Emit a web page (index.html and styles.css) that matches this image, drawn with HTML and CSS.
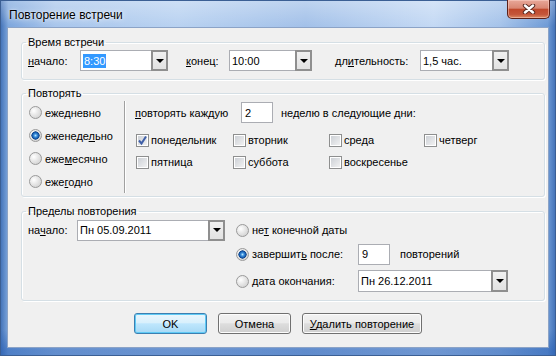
FILE: index.html
```html
<!DOCTYPE html>
<html lang="ru">
<head>
    <meta charset="UTF-8">
    <meta name="viewport" content="width=device-width, initial-scale=1.0">
    <title>Повторение встречи</title>
    <link rel="stylesheet" href="styles.css">
</head>
<body>
    <div class="window">
        <div class="titlebar">
            <span class="title">Повторение встречи</span>
            <button class="close" title="Закрыть">
                <svg width="14" height="10" viewBox="0 0 14 10">
                    <path d="M3 1.5 L11 8.5 M11 1.5 L3 8.5" stroke="#5a2a22" stroke-width="4.4" stroke-linecap="round"/>
                    <path d="M3 1.5 L11 8.5 M11 1.5 L3 8.5" stroke="#fff" stroke-width="2.4" stroke-linecap="round"/>
                </svg>
            </button>
        </div>

        <div class="client">
            <fieldset class="group group-time">
                <legend>Время встречи</legend>
                <div class="time-row">
                    <span class="lbl lbl-start"><u>н</u>ачало:</span>
                    <div class="combo combo-start">
                        <span class="value"><span class="sel">8:30</span></span>
                        <span class="drop"></span>
                    </div>
                    <span class="lbl lbl-end"><u>к</u>онец:</span>
                    <div class="combo combo-end">
                        <span class="value">10:00</span>
                        <span class="drop"></span>
                    </div>
                    <span class="lbl lbl-dur">дл<u>и</u>тельность:</span>
                    <div class="combo combo-dur">
                        <span class="value">1,5 час.</span>
                        <span class="drop"></span>
                    </div>
                </div>
            </fieldset>

            <fieldset class="group group-repeat">
                <legend>Повторять</legend>
                <div class="repeat-body">
                    <div class="freq">
                        <label class="opt"><span class="radio"></span><span>еже<u>д</u>невно</span></label>
                        <label class="opt"><span class="radio on"></span><span>еженеде<u>л</u>ьно</span></label>
                        <label class="opt"><span class="radio"></span><span>еже<u>м</u>есячно</span></label>
                        <label class="opt"><span class="radio"></span><span>еже<u>г</u>одно</span></label>
                    </div>
                    <div class="weekly">
                        <div class="every-row">
                            <span class="every-lbl"><u>п</u>овторять каждую</span>
                            <span class="field field-every">2</span>
                            <span class="every-tail">неделю в следующие дни:</span>
                        </div>
                        <div class="days">
                            <label class="opt day">
                                <span class="check on">
                                    <svg width="11" height="11" viewBox="0 0 11 11"><path d="M2 5.5 L4.5 8.5 L9 1.5" fill="none" stroke="#3f5fa8" stroke-width="2"/></svg>
                                </span><span>понедельник</span>
                            </label>
                            <label class="opt day"><span class="check"></span><span>вторник</span></label>
                            <label class="opt day"><span class="check"></span><span>среда</span></label>
                            <label class="opt day"><span class="check"></span><span>четверг</span></label>
                            <label class="opt day"><span class="check"></span><span>пятница</span></label>
                            <label class="opt day"><span class="check"></span><span>суббота</span></label>
                            <label class="opt day"><span class="check"></span><span>воскресенье</span></label>
                        </div>
                    </div>
                </div>
            </fieldset>

            <fieldset class="group group-range">
                <legend>Пределы повторения</legend>
                <div class="range-body">
                    <div class="range-start">
                        <span class="lbl lbl-from">на<u>ч</u>ало:</span>
                        <div class="combo combo-from">
                            <span class="value">Пн 05.09.2011</span>
                            <span class="drop"></span>
                        </div>
                    </div>
                    <div class="range-end">
                        <label class="opt end-opt"><span class="radio"></span><span>не<u>т</u> конечной даты</span></label>
                        <div class="end-row">
                            <label class="opt end-label"><span class="radio on"></span><span>завершит<u>ь</u> после:</span></label>
                            <span class="field field-count">9</span>
                            <span class="count-tail">повторений</span>
                        </div>
                        <div class="end-row end-row-date">
                            <label class="opt end-label"><span class="radio"></span><span><u>д</u>ата окончания:</span></label>
                            <div class="combo combo-until">
                                <span class="value">Пн 26.12.2011</span>
                                <span class="drop"></span>
                            </div>
                        </div>
                    </div>
                </div>
            </fieldset>

            <div class="buttons">
                <button class="btn btn-default">OK</button>
                <button class="btn">Отмена</button>
                <button class="btn btn-wide"><u>У</u>далить повторение</button>
            </div>
        </div>
    </div>
</body>
</html>
```

FILE: styles.css
```css
body {
    margin: 0;
    font-family: "Liberation Sans", Arial, sans-serif;
    font-size: 11px;
    line-height: 14px;
    color: #000;
}

u {
    text-underline-offset: 1px;
}

.window {
    width: 556px;
    height: 356px;
    box-sizing: border-box;
    padding: 0 7px 8px 7px;
    display: flex;
    flex-direction: column;
    background:
        linear-gradient(rgba(255, 255, 255, 0.3), rgba(255, 255, 255, 0) 26px),
        linear-gradient(rgba(40, 90, 170, 0) 330px, rgba(40, 95, 180, 0.55) 350px),
        linear-gradient(to right, #3f6fb5 0, #7ea7dd 1.5%, #a9c6ec 10%, #b9d2f1 32%, #a3c1e9 55%, #c4d9f4 78%, #a5c3ea 90%, #6f9bd6 98.5%, #3f6fb5 100%);
    box-shadow: inset 0 0 0 1px #3b5f94;
}

.titlebar {
    height: 27px;
    flex-shrink: 0;
    display: flex;
    align-items: flex-start;
    justify-content: space-between;
}

.title {
    font-size: 12px;
    line-height: 16px;
    margin: 7px 0 0 2px;
    text-shadow: 0 0 6px rgba(255, 255, 255, 0.9), 0 0 2px rgba(255, 255, 255, 0.8);
}

.close {
    width: 43px;
    height: 19px;
    margin-right: -1px;
    padding: 0;
    border: 1px solid #5b2119;
    border-top: none;
    border-radius: 0 0 5px 5px;
    background: linear-gradient(#e8a899 0%, #d98773 45%, #c0492c 52%, #c4563a 80%, #dc8b63 100%);
    box-shadow: inset 0 0 0 1px rgba(255, 220, 210, 0.45);
    display: flex;
    align-items: center;
    justify-content: center;
}

.client {
    flex: 1;
    background: #f0f0f0;
    border: 1px solid #8ba3c7;
    padding: 7px 3px 0 13px;
    display: flex;
    flex-direction: column;
}

/* group boxes */
.group {
    margin: 0;
    padding: 0;
    min-width: 0;
    border: 1px solid #d5dfe5;
    border-radius: 3px;
    box-shadow: inset 1px 1px #fff, 1px 1px #fff;
}

.group legend {
    margin-left: 4px;
    padding: 0 2px;
    line-height: 14px;
}

.group-time {
    padding: 1px 0 8px 0;
}

.group-repeat {
    margin-top: 6px;
    padding: 1px 0 3px 0;
}

.group-range {
    margin-top: 7px;
    padding: 1px 0 8px 0;
}

/* time row */
.time-row {
    display: flex;
    align-items: center;
    height: 21px;
    padding-left: 6px;
}

.lbl {
    flex: none;
}

.lbl-start {
    width: 52px;
}

.lbl-end {
    width: 43px;
    margin-left: 18px;
}

.lbl-dur {
    width: 85px;
    margin-left: 23px;
}

/* combo boxes */
.combo {
    display: flex;
    height: 21px;
    box-sizing: border-box;
    border: 1px solid #abadb3;
    background: #fff;
    flex: none;
}

.combo .value {
    flex: 1;
    display: flex;
    align-items: center;
    padding-left: 2px;
    white-space: nowrap;
}

.combo .drop {
    width: 17px;
    box-sizing: border-box;
    border: 2px solid #8f8f8f;
    background: linear-gradient(#f0f0f0, #e2e2e2);
    display: flex;
    align-items: center;
    justify-content: center;
    margin: -1px -1px -1px 0;
}

.combo .drop::after {
    content: "";
    width: 0;
    height: 0;
    border-left: 4px solid transparent;
    border-right: 4px solid transparent;
    border-top: 4px solid #000;
}

.sel {
    background: #3399ff;
    color: #fff;
    padding: 0 1px;
}

.combo-start {
    width: 88px;
}

.combo-end {
    width: 83px;
}

.combo-dur {
    width: 89px;
}

.combo-from {
    width: 148px;
}

.combo-until {
    width: 150px;
    height: 22px;
}

/* text fields */
.field {
    height: 21px;
    box-sizing: border-box;
    border: 1px solid #abadb3;
    background: #fff;
    padding-left: 3px;
    display: flex;
    align-items: center;
    flex: none;
}

/* radios and checks */
.opt {
    display: flex;
    align-items: center;
    white-space: nowrap;
}

.radio {
    width: 13px;
    height: 13px;
    box-sizing: border-box;
    margin-right: 3px;
    flex: none;
    border: 1px solid #9a9a9a;
    border-radius: 50%;
    background: radial-gradient(circle at 35% 35%, #ffffff 0, #e6e6e6 45%, #c9c9c9 100%);
}

.radio.on {
    background:
        radial-gradient(circle at 50% 50%, #b7e6ff 0, #3b8fdc 1.6px, #1356a8 3.2px, #0d3f80 3.9px, rgba(13, 63, 128, 0) 4.3px),
        radial-gradient(circle at 35% 35%, #ffffff 0, #e6e6e6 45%, #c9c9c9 100%);
}

.check {
    width: 13px;
    height: 13px;
    box-sizing: border-box;
    margin-right: 2px;
    flex: none;
    border: 1px solid #8e8f8f;
    background: linear-gradient(135deg, #c9cdd3, #f5f5f5);
    box-shadow: inset 0 0 0 1px #fff;
    display: flex;
    align-items: center;
    justify-content: center;
}

/* repeat group */
.repeat-body {
    display: flex;
}

.freq {
    width: 95px;
    padding-left: 7px;
    border-right: 1px solid #a0a0a0;
    box-shadow: 1px 0 #fff;
}

.freq .opt {
    height: 23px;
}

.weekly {
    padding: 1px 0 0 10px;
}

.every-row {
    display: flex;
    align-items: center;
    height: 21px;
}

.every-lbl {
    width: 106px;
    flex: none;
}

.field-every {
    width: 32px;
}

.every-tail {
    margin-left: 8px;
}

.days {
    display: grid;
    grid-template-columns: 97px 96px 95px auto;
    grid-auto-rows: 22px;
    margin: 6px 0 0 1px;
}

/* range group */
.range-body {
    display: flex;
    padding-left: 6px;
}

.range-start {
    display: flex;
    align-items: center;
    height: 22px;
}

.lbl-from {
    width: 49px;
}

.range-end {
    margin-left: 11px;
}

.end-opt {
    height: 22px;
}

.end-row {
    display: flex;
    align-items: center;
    height: 22px;
    margin-top: 2px;
}

.end-row-date {
    margin-top: 5px;
}

.end-label {
    width: 122px;
    flex: none;
}

.field-count {
    width: 32px;
}

.count-tail {
    margin-left: 10px;
}

/* dialog buttons */
.buttons {
    display: flex;
    justify-content: center;
    gap: 11px;
    margin-top: 12px;
    padding-right: 10px;
}

.btn {
    width: 73px;
    height: 21px;
    padding: 0;
    box-sizing: border-box;
    font-family: inherit;
    font-size: 11px;
    color: #000;
    border: 1px solid #707070;
    border-radius: 3px;
    background: linear-gradient(#f2f2f2 0%, #ebebeb 45%, #dddddd 52%, #cfcfcf 100%);
    box-shadow: inset 0 0 0 1px #fcfcfc;
}

.btn-default {
    border-color: #3c7fb1;
    background: linear-gradient(#eaf6fd 0%, #d9f0fc 45%, #bee6fd 52%, #a7d9f5 100%);
    box-shadow: inset 0 0 0 1px #5fcaf5;
}

.btn-wide {
    width: 120px;
}
```
